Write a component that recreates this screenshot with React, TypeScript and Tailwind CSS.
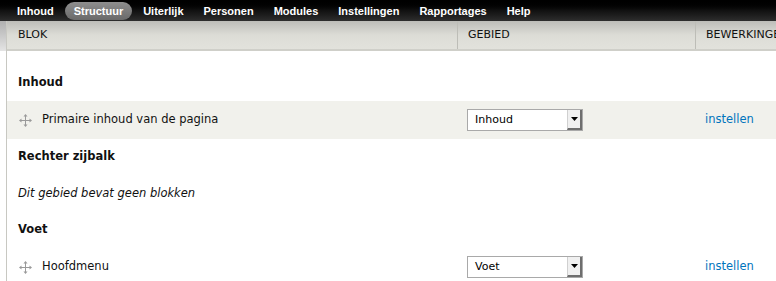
import React from 'react'

const NAV = ['Inhoud', 'Structuur', 'Uiterlijk', 'Personen', 'Modules', 'Instellingen', 'Rapportages', 'Help']

type Row =
  | { kind: 'region'; label: string }
  | { kind: 'empty'; label: string }
  | { kind: 'block'; label: string; region: string; striped?: boolean }

const rows: Row[] = [
  { kind: 'region', label: 'Inhoud' },
  { kind: 'block', label: 'Primaire inhoud van de pagina', region: 'Inhoud', striped: true },
  { kind: 'region', label: 'Rechter zijbalk' },
  { kind: 'empty', label: 'Dit gebied bevat geen blokken' },
  { kind: 'region', label: 'Voet' },
  { kind: 'block', label: 'Hoofdmenu', region: 'Voet' },
]

function DragHandle() {
  return (
    <svg width="13" height="13" viewBox="0 0 13 13" className="shrink-0">
      <g fill="none" stroke="#9a9a9a" strokeWidth="1">
        <path d="M6.5 1v11M1 6.5h11" />
      </g>
      <g fill="#9a9a9a">
        <path d="M6.5 0L4.5 2.5h4z" />
        <path d="M6.5 13L4.5 10.5h4z" />
        <path d="M0 6.5L2.5 4.5v4z" />
        <path d="M13 6.5L10.5 4.5v4z" />
      </g>
    </svg>
  )
}

function RegionSelect({ value }: { value: string }) {
  return (
    <div className="flex h-[22px] w-[116px] border border-[#a9a9a9] bg-white">
      <span className="flex-1 pl-[7px] text-[11px] leading-[20px] text-black">{value}</span>
      <div className="flex h-full w-[15px] items-center justify-center border-l border-[#d0d0d0] border-r-2 border-b-2 border-r-[#6e6e6e] border-b-[#6e6e6e] bg-[#f0f0f0]">
        <svg width="7" height="4" viewBox="0 0 7 4">
          <path d="M0 0h7L3.5 4z" fill="#000" />
        </svg>
      </div>
    </div>
  )
}

export default function App() {
  return (
    <div
      className="h-[281px] w-[776px] overflow-hidden bg-white text-[11.5px] text-[#222]"
      style={{ fontFamily: '"DejaVu Sans", Verdana, sans-serif' }}
    >
      {/* Toolbar */}
      <div className="flex h-[21px] items-center bg-gradient-to-b from-[#000] via-[#111] to-[#2e2e2e] pl-[8px]">
        {NAV.map((item) => (
          <span
            key={item}
            className={`mr-[2px] rounded-full px-[9px] text-[11px] font-bold leading-[18px] text-white ${
              item === 'Structuur' ? 'bg-gradient-to-b from-[#8e8e8e] to-[#6a6a6a]' : ''
            }`}
            style={{ fontFamily: '"Liberation Sans", Arial, sans-serif' }}
          >
            {item}
          </span>
        ))}
      </div>

      <div className="flex">
        <div className="w-[6px] shrink-0">
          <div className="h-[30px] bg-gradient-to-b from-[#b0b0b0] to-[#e4e4e4]" />
        </div>
        <div className="w-[770px] shrink-0 border-l border-[#c8c8c2]">
          {/* Header */}
          <div className="grid h-[30px] grid-cols-[450px_238px_1fr] border-b-2 border-[#cfcfc9] bg-gradient-to-b from-[#bdbdb9] via-[#dcdcd6] to-[#e2e2dc] text-[11px] text-[#111]">
            <div className="flex items-center pl-[11px]">BLOK</div>
            <div className="flex items-center border-l border-[#bdbdb7] pl-[10px]">GEBIED</div>
            <div className="flex items-center whitespace-nowrap border-l border-[#bdbdb7] pl-[10px]">BEWERKINGEN</div>
          </div>

          <div className="h-[14px]" />

          {rows.map((row, i) => {
            if (row.kind === 'region') {
              return (
                <div key={i} className="flex h-[36px] items-center pl-[11px] font-bold text-[#111]">
                  {row.label}
                </div>
              )
            }
            if (row.kind === 'empty') {
              return (
                <div key={i} className="flex h-[37px] items-center pl-[11px] italic text-[#111]">
                  {row.label}
                </div>
              )
            }
            return (
              <div
                key={i}
                className={`grid h-[38px] grid-cols-[450px_238px_1fr] items-center ${row.striped ? 'bg-[#f1f1ec]' : ''}`}
              >
                <div className="flex items-center gap-[10px] pl-[12px] text-[#111]">
                  <DragHandle />
                  <span>{row.label}</span>
                </div>
                <div className="pl-[10px]">
                  <RegionSelect value={row.region} />
                </div>
                <div className="pl-[10px] text-[#0074bd]">instellen</div>
              </div>
            )
          })}
        </div>
      </div>
    </div>
  )
}
